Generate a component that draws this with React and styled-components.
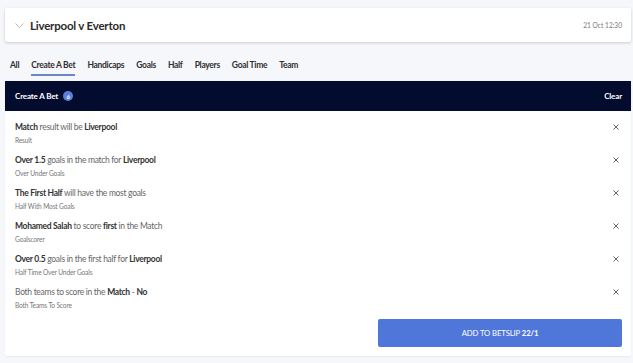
import React from 'react'
import styled, { createGlobalStyle } from 'styled-components'

const Global = createGlobalStyle`
  html, body {
    margin: 0;
    padding: 0;
    background: #f6f7fb;
    font-family: 'Lato', 'Open Sans', sans-serif;
  }
`

const Page = styled.div`
  padding: 8px 2px 8px 5px;
  box-sizing: border-box;
  width: 633px;
`

const MatchCard = styled.div`
  height: 34px;
  background: #fff;
  border-radius: 2px;
  box-shadow: 0 1px 3px rgba(0, 0, 0, 0.18);
  display: flex;
  align-items: center;
  padding: 0 9px 0 10px;
  box-sizing: border-box;
  & h1 {
    margin: 0 0 0 6px;
    font-size: 11.5px;
    letter-spacing: -0.2px;
    font-weight: 700;
    color: #2b2b2b;
    flex: 1;
  }
  & .date {
    font-size: 6.6px;
    color: #777;
  }
`

const Tabs = styled.nav`
  display: flex;
  gap: 12px;
  padding: 0 5px;
  margin-top: 17px;
`

const Tab = styled.span`
  font-size: 8.5px;
  letter-spacing: -0.3px;
  font-weight: 700;
  color: #2f2f2f;
  line-height: 13px;
  height: 17px;
  box-sizing: border-box;
  border-bottom: 2px solid ${(p) => (p.$active ? '#6a86c4' : 'transparent')};
`

const Panel = styled.section`
  margin-top: 5px;
  background: #fff;
  border-radius: 2px;
  box-shadow: 0 1px 2px rgba(0, 0, 0, 0.06);
`

const PanelHead = styled.div`
  height: 30px;
  background: #030b2e;
  display: flex;
  align-items: center;
  padding: 0 9px 0 10px;
  color: #fff;
  font-size: 8px;
  letter-spacing: -0.15px;
  font-weight: 700;
  & .title {
    flex: 1;
    display: flex;
    align-items: center;
    gap: 5px;
  }
`

const Badge = styled.span`
  width: 10px;
  height: 10px;
  border-radius: 50%;
  background: #5b7fdc;
  color: #fff;
  font-size: 6px;
  display: inline-flex;
  align-items: center;
  justify-content: center;
`

const List = styled.div`
  padding: 10px 9px 9px 10px;
  display: flex;
  flex-direction: column;
`

const Item = styled.div`
  height: 33px;
  display: flex;
  align-items: flex-start;
  & .text {
    flex: 1;
  }
`

const Title = styled.div`
  font-size: 8.5px;
  letter-spacing: -0.3px;
  line-height: 12px;
  color: #666;
  & b {
    color: #333;
    font-weight: 700;
  }
`

const Sub = styled.div`
  font-size: 6.6px;
  letter-spacing: -0.15px;
  line-height: 10px;
  margin-top: 2px;
  color: #777;
`

const Close = styled.span`
  width: 12px;
  height: 12px;
  display: flex;
  align-items: center;
  justify-content: center;
`

const Footer = styled.div`
  display: flex;
  justify-content: flex-end;
`

const AddButton = styled.button`
  width: 244px;
  height: 28px;
  border: none;
  border-radius: 2px;
  background: #4f77da;
  color: #fff;
  font-family: inherit;
  font-size: 7.7px;
  letter-spacing: -0.1px;
  text-transform: uppercase;
  & b {
    font-weight: 700;
  }
`

const bets = [
  { title: <><b>Match</b> result will be <b>Liverpool</b></>, sub: 'Result' },
  { title: <><b>Over 1.5</b> goals in the match for <b>Liverpool</b></>, sub: 'Over Under Goals' },
  { title: <><b>The First Half</b> will have the most goals</>, sub: 'Half With Most Goals' },
  { title: <><b>Mohamed Salah</b> to score <b>first</b> in the Match</>, sub: 'Goalscorer' },
  { title: <><b>Over 0.5</b> goals in the first half for <b>Liverpool</b></>, sub: 'Half Time Over Under Goals' },
  { title: <>Both teams to score in the <b>Match</b> - <b>No</b></>, sub: 'Both Teams To Score' }
]

const tabs = ['All', 'Create A Bet', 'Handicaps', 'Goals', 'Half', 'Players', 'Goal Time', 'Team']

function XIcon() {
  return (
    <svg width="6" height="6" viewBox="0 0 6 6">
      <path d="M0.5 0.5 L5.5 5.5 M5.5 0.5 L0.5 5.5" stroke="#555" strokeWidth="0.9" />
    </svg>
  )
}

export default function App() {
  return (
    <Page>
      <Global />
      <MatchCard>
        <svg width="9" height="5" viewBox="0 0 9 5">
          <path d="M0.5 0.5 L4.5 4.5 L8.5 0.5" fill="none" stroke="#aaa" strokeWidth="0.8" />
        </svg>
        <h1>Liverpool v Everton</h1>
        <span className="date">21 Oct 12:30</span>
      </MatchCard>

      <Tabs>
        {tabs.map((t) => (
          <Tab key={t} $active={t === 'Create A Bet'}>
            {t}
          </Tab>
        ))}
      </Tabs>

      <Panel>
        <PanelHead>
          <span className="title">
            Create A Bet <Badge>6</Badge>
          </span>
          <span>Clear</span>
        </PanelHead>
        <List>
          {bets.map((b, i) => (
            <Item key={i}>
              <div className="text">
                <Title>{b.title}</Title>
                <Sub>{b.sub}</Sub>
              </div>
              <Close>
                <XIcon />
              </Close>
            </Item>
          ))}
          <Footer>
            <AddButton>
              Add to betslip <b>22/1</b>
            </AddButton>
          </Footer>
        </List>
      </Panel>
    </Page>
  )
}
